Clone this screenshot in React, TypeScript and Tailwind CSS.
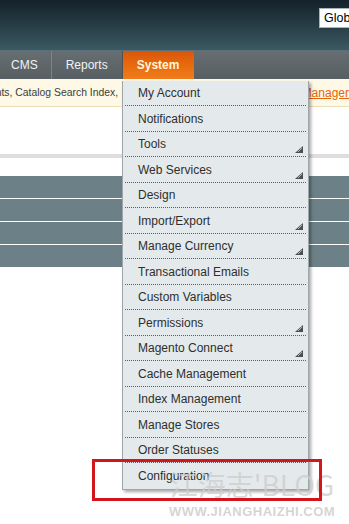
const items: { label: string; sub?: boolean }[] = [
  { label: "My Account" },
  { label: "Notifications" },
  { label: "Tools", sub: true },
  { label: "Web Services", sub: true },
  { label: "Design" },
  { label: "Import/Export", sub: true },
  { label: "Manage Currency", sub: true },
  { label: "Transactional Emails" },
  { label: "Custom Variables" },
  { label: "Permissions", sub: true },
  { label: "Magento Connect", sub: true },
  { label: "Cache Management" },
  { label: "Index Management" },
  { label: "Manage Stores" },
  { label: "Order Statuses" },
  { label: "Configuration" },
];

function SubArrow() {
  return (
    <svg className="absolute right-[3px] bottom-[3px]" width="8" height="7" viewBox="0 0 8 7">
      <polygon points="8,0 8,7 0,7" fill="#4a4f52" />
      <line x1="7" y1="2" x2="3" y2="6" stroke="#c9d0d3" strokeWidth="0.8" />
    </svg>
  );
}

export default function App() {
  return (
    <div className="relative w-[349px] h-[524px] overflow-hidden bg-white font-['Liberation_Sans',Arial,sans-serif] text-[12px]">
      {/* header */}
      <div className="h-[51px] bg-gradient-to-b from-[#14222a] to-[#3c5962] border-b border-[#577079] flex justify-end items-start pt-[8px]">
        <div className="w-[30px] h-[20px] bg-white border border-[#a9b4b8] border-r-0 pl-[4px] leading-[18px] text-[12.5px] text-black overflow-hidden whitespace-nowrap">
          Global
        </div>
      </div>

      {/* nav */}
      <div className="h-[28px] bg-gradient-to-b from-[#666e72] to-[#575f63] flex items-stretch text-[#f2f2f2] whitespace-nowrap">
        <div className="flex items-center pl-[11px] pr-[13px] border-r border-[#7d858a]">CMS</div>
        <div className="flex items-center pl-[14px] pr-[14px] border-r border-[#4b5256]">Reports</div>
        <div className="flex items-center pl-[14px] pr-[15px] font-bold text-[#fff6de] bg-gradient-to-b from-[#d9560a] via-[#e96a0e] to-[#f07d1c]">
          System
        </div>
      </div>

      {/* notice */}
      <div className="h-[28px] bg-[#fdf9e6] border-b border-[#ecdfb5] flex items-center text-[#3c3c3c] whitespace-nowrap">
        <div className="w-[121px] flex justify-end overflow-hidden text-[10.4px]">
          <span>nts, Catalog Search Index,</span>
        </div>
        <div className="w-[188px]" />
        <span className="text-[#e8630a] underline">Manager</span>
      </div>

      {/* content */}
      <div className="h-[47px]" />
      <div className="h-[4px] bg-[#dedede]" />
      <div className="h-[18px]" />
      <div className="flex flex-col gap-px">
        <div className="h-[22px] bg-[#6c8187]" />
        <div className="h-[22px] bg-[#6c8187]" />
        <div className="h-[22px] bg-[#6c8187]" />
        <div className="h-[22px] bg-[#6c8187]" />
      </div>

      {/* dropdown */}
      <div className="absolute left-[122px] top-[80.5px] w-[187px] bg-[#e4eaec] border border-[#9ea6a9] border-t-0 shadow-[2px_2px_3px_rgba(0,0,0,0.35)] text-[#2e2e2e] px-[2px]">
        {items.map((it, i) => (
          <div
            key={it.label}
            className={
              "relative h-[25.5px] flex items-center pl-[13px] pt-px " +
              (i < items.length - 1 ? "border-b border-dotted border-[#5a5f62]" : "")
            }
          >
            {it.label}
            {it.sub && <SubArrow />}
          </div>
        ))}
      </div>

      {/* watermark */}
      <div className="absolute left-[166px] top-[468px] w-[172px] flex flex-col items-center pointer-events-none">
        <div className="text-[28px] leading-[32px] text-[rgba(205,205,205,0.75)] font-['Noto_Sans_CJK_SC','Liberation_Sans',sans-serif] whitespace-nowrap">
          江海志'BLOG
        </div>
        <div className="text-[13px] leading-[15px] font-bold text-[rgba(205,205,205,0.85)] tracking-[0.5px] whitespace-nowrap mt-[4px]">
          WWW.JIANGHAIZHI.COM
        </div>
      </div>

      {/* highlight box */}
      <div className="absolute left-[92px] top-[459px] w-[230px] h-[42px] border-[3px] border-[#d2161c]" />
    </div>
  );
}
